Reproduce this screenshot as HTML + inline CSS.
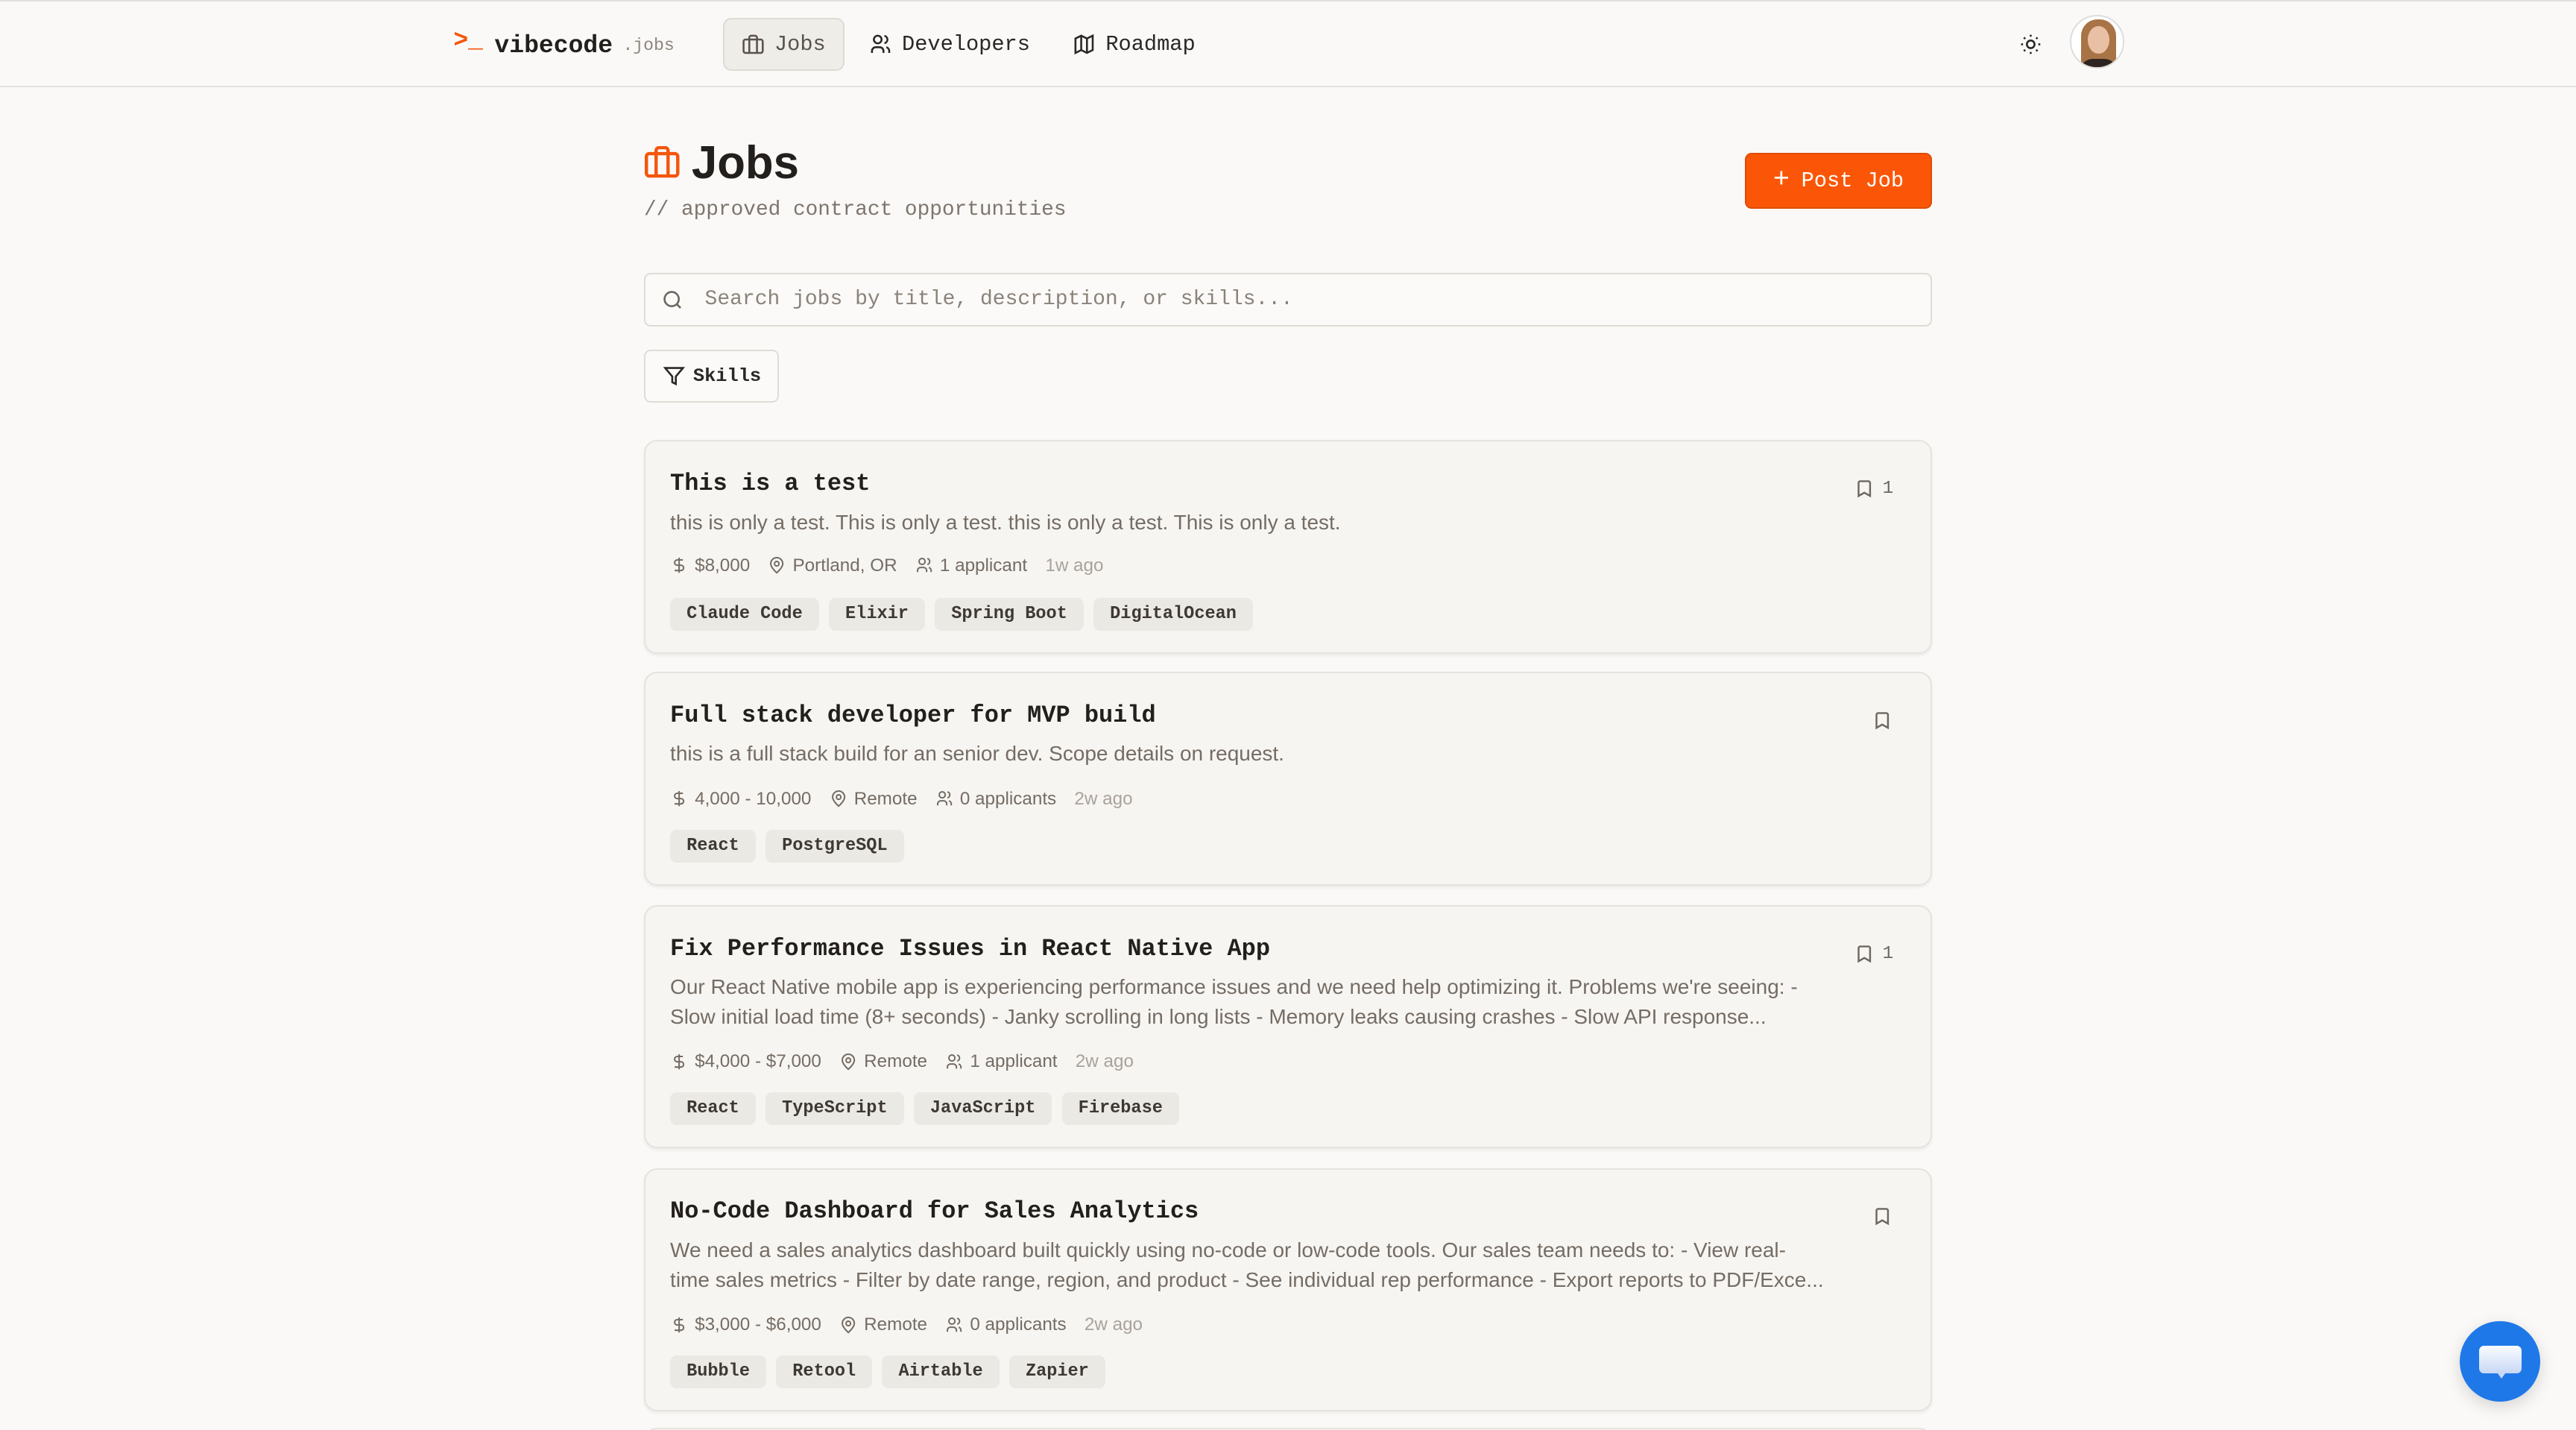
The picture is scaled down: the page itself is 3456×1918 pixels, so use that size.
<!DOCTYPE html>
<html><head><meta charset="utf-8">
<style>
*{box-sizing:border-box;margin:0;padding:0}
html,body{width:3456px;height:1918px;overflow:hidden;background:#faf9f7}
#z{zoom:2.2041;width:1568px;height:870.2px;position:relative;background:#faf9f7;border-top:1px solid #e2e0dc;font-family:"Liberation Sans",sans-serif;color:#2b2724}
.mono{font-family:"Liberation Mono",monospace}
.abs{position:absolute}
header{position:absolute;left:0;top:0;width:1568px;height:52px;border-bottom:1px solid #e4e2de;background:#faf9f7}
.nav{position:absolute;top:10px;height:32px;display:flex;align-items:center;gap:6px;font-family:"Liberation Mono",monospace;font-size:13px;color:#2b2724}
svg{display:block}
.card{position:absolute;left:392px;width:784px;background:#f6f5f2;border:1px solid #e6e3de;border-radius:8px;box-shadow:0 1px 2px rgba(0,0,0,.06)}
.t{position:absolute;left:15px;font-family:"Liberation Mono",monospace;font-weight:bold;font-size:14.5px;color:#221f1c}
.d{position:absolute;left:15px;font-size:12.7px;color:#756c64;line-height:18px;white-space:nowrap}
.m{position:absolute;left:15px;display:flex;align-items:center;font-size:11px;color:#756c64;gap:4px;white-space:nowrap}
.m .g{color:#aaa29a;margin-left:7px}
.m svg{margin-left:7px}
.m svg:first-child{margin-left:0}
.tags{position:absolute;left:15px;display:flex;gap:6px}
.tag{height:20px;padding:0 10px;background:#ebe9e4;border-radius:4px;font-family:"Liberation Mono",monospace;font-weight:bold;font-size:10.7px;color:#3e3833;line-height:20px}
.bm{position:absolute;display:flex;align-items:center;gap:5px;font-family:"Liberation Mono",monospace;font-size:11px;color:#6e665f}
</style></head><body><div id="z">
<svg width="0" height="0" style="position:absolute">
<symbol id="usd" viewBox="0 0 24 24"><path d="M12 2v20M17 5H9.5a3.5 3.5 0 0 0 0 7h5a3.5 3.5 0 0 1 0 7H6" fill="none" stroke="#756c64" stroke-width="2"/></symbol>
<symbol id="pin" viewBox="0 0 24 24"><path d="M20 10c0 5-8 12-8 12s-8-7-8-12a8 8 0 0 1 16 0z" fill="none" stroke="#756c64" stroke-width="2"/><circle cx="12" cy="10" r="3" fill="none" stroke="#756c64" stroke-width="2"/></symbol>
<symbol id="usr" viewBox="0 0 24 24"><g fill="none" stroke="#756c64" stroke-width="2"><circle cx="9" cy="7" r="4"/><path d="M3 21v-2a4 4 0 0 1 4-4h4a4 4 0 0 1 4 4v2M16 3.1a4 4 0 0 1 0 7.8M21 21v-2a4 4 0 0 0-3-3.9"/></g></symbol>
</svg>
<header>
 <div class="abs mono" style="left:276px;top:15px;color:#f4560b;font-size:15px;font-weight:bold">&gt;_</div>
 <div class="abs mono" style="left:301px;top:18px;font-size:15px;font-weight:bold;color:#221f1c">vibecode</div>
 <div class="abs mono" style="left:379px;top:21px;font-size:10.5px;color:#8e867e">.jobs</div>
 <div class="nav" style="left:440px;width:74px;background:#efede8;border:1px solid #dedbd5;border-radius:5px;justify-content:center;color:#5a534d">
  <svg width="14" height="14" viewBox="0 0 24 24" fill="none" stroke="#5a534d" stroke-width="2"><rect x="2" y="7" width="20" height="14" rx="2"/><path d="M16 21V5a2 2 0 0 0-2-2h-4a2 2 0 0 0-2 2v16M8 7v14M16 7v14"/></svg>Jobs</div>
 <div class="nav" style="left:529px">
  <svg width="14" height="14" viewBox="0 0 24 24" fill="none" stroke="#2b2724" stroke-width="2"><circle cx="9" cy="7" r="4"/><path d="M3 21v-2a4 4 0 0 1 4-4h4a4 4 0 0 1 4 4v2M16 3.1a4 4 0 0 1 0 7.8M21 21v-2a4 4 0 0 0-3-3.9"/></svg>Developers</div>
 <div class="nav" style="left:653px">
  <svg width="14" height="14" viewBox="0 0 24 24" fill="none" stroke="#2b2724" stroke-width="2"><path d="M3 6l6-3 6 3 6-3v15l-6 3-6-3-6 3zM9 3v15M15 6v15"/></svg>Roadmap</div>
 <svg class="abs" style="left:1229px;top:19px" width="14" height="14" viewBox="0 0 24 24" fill="none" stroke="#2b2724" stroke-width="2"><circle cx="12" cy="12" r="4"/><path d="M12 2v2M12 20v2M4.9 4.9l1.4 1.4M17.7 17.7l1.4 1.4M2 12h2M20 12h2M4.9 19.1l1.4-1.4M17.7 6.3l1.4-1.4"/></svg>
 <div class="abs" style="left:1260px;top:8px;width:33px;height:33px;border-radius:50%;border:1px solid #ddd;background:#fff;overflow:hidden">
  <div class="abs" style="left:6px;top:2px;width:21px;height:30px;border-radius:10px 10px 4px 4px;background:#a87446"></div>
  <div class="abs" style="left:10px;top:6px;width:13px;height:17px;border-radius:50%;background:#eac0a5"></div>
  <div class="abs" style="left:5px;top:26px;width:23px;height:10px;border-radius:8px 8px 0 0;background:#2d2420"></div>
 </div>
</header>

<svg class="abs" style="left:392px;top:88px" width="22" height="20" viewBox="0 0 24 22" fill="none" stroke="#f4560b" stroke-width="2.2"><rect x="1.5" y="5" width="21" height="15" rx="2"/><path d="M16 20V3a2 2 0 0 0-2-2h-4a2 2 0 0 0-2 2v17M8 5v15M16 5v15"/></svg>
<div class="abs" style="left:421px;top:82px;font-size:28px;font-weight:bold;color:#221f1c">Jobs</div>
<div class="abs mono" style="left:392px;top:120px;font-size:12.6px;color:#7d756e">// approved contract opportunities</div>
<div class="abs mono" style="left:1062px;top:92px;width:114px;height:34px;background:#fb5607;border:1px solid #e04c05;border-radius:4px;color:#fff;font-size:13px;display:flex;align-items:center;justify-content:center;gap:7px"><span style="font-size:17px;font-weight:normal">+</span>Post Job</div>

<div class="abs" style="left:392px;top:165px;width:784px;height:33px;border:1px solid #dfdcd6;border-radius:4px;background:#fbfaf8"></div>
<svg class="abs" style="left:403px;top:175px" width="13" height="13" viewBox="0 0 24 24" fill="none" stroke="#6e665f" stroke-width="2.2"><circle cx="11" cy="11" r="8"/><path d="M21 21l-4.3-4.3"/></svg>
<div class="abs mono" style="left:429px;top:174px;font-size:12.7px;color:#8a827a">Search jobs by title, description, or skills...</div>

<div class="abs mono" style="left:392px;top:212px;width:82px;height:32px;border:1px solid #dfdcd6;border-radius:4px;background:#fbfaf8;font-size:11.5px;font-weight:bold;display:flex;align-items:center;gap:5px;padding-left:11px;color:#2b2724"><svg width="13" height="13" viewBox="0 0 24 24" fill="none" stroke="#2b2724" stroke-width="2.2"><path d="M22 3H2l8 9.5V19l4 2v-8.5z"/></svg>Skills</div>

<div class="card" style="top:267px;height:130px">
 <div class="t" style="top:17px">This is a test</div>
 <div class="bm" style="left:736px;top:22px"><svg width="12" height="13" viewBox="0 0 24 24" fill="none" stroke="#6e665f" stroke-width="2.2"><path d="M19 21l-7-4-7 4V5a2 2 0 0 1 2-2h10a2 2 0 0 1 2 2z"/></svg>1</div>
 <div class="d" style="top:40px">this is only a test. This is only a test. this is only a test. This is only a test.</div>
 <div class="m" style="top:69px"><svg width="11" height="11"><use href="#usd"/></svg>$8,000<svg width="11" height="11"><use href="#pin"/></svg>Portland, OR<svg width="11" height="11"><use href="#usr"/></svg>1 applicant<span class="g">1w ago</span></div>
 <div class="tags" style="top:95px"><span class="tag">Claude Code</span><span class="tag">Elixir</span><span class="tag">Spring Boot</span><span class="tag">DigitalOcean</span></div>
</div>
<div class="card" style="top:408px;height:130px">
 <div class="t" style="top:17px">Full stack developer for MVP build</div>
 <div class="bm" style="left:747px;top:22px"><svg width="12" height="13" viewBox="0 0 24 24" fill="none" stroke="#6e665f" stroke-width="2.2"><path d="M19 21l-7-4-7 4V5a2 2 0 0 1 2-2h10a2 2 0 0 1 2 2z"/></svg></div>
 <div class="d" style="top:40px">this is a full stack build for an senior dev. Scope details on request.</div>
 <div class="m" style="top:70px"><svg width="11" height="11"><use href="#usd"/></svg>4,000 - 10,000<svg width="11" height="11"><use href="#pin"/></svg>Remote<svg width="11" height="11"><use href="#usr"/></svg>0 applicants<span class="g">2w ago</span></div>
 <div class="tags" style="top:95px"><span class="tag">React</span><span class="tag">PostgreSQL</span></div>
</div>
<div class="card" style="top:550px;height:148px">
 <div class="t" style="top:17px">Fix Performance Issues in React Native App</div>
 <div class="bm" style="left:736px;top:22px"><svg width="12" height="13" viewBox="0 0 24 24" fill="none" stroke="#6e665f" stroke-width="2.2"><path d="M19 21l-7-4-7 4V5a2 2 0 0 1 2-2h10a2 2 0 0 1 2 2z"/></svg>1</div>
 <div class="d" style="top:40px">Our React Native mobile app is experiencing performance issues and we need help optimizing it. Problems we're seeing: -<br>Slow initial load time (8+ seconds) - Janky scrolling in long lists - Memory leaks causing crashes - Slow API response...</div>
 <div class="m" style="top:88px"><svg width="11" height="11"><use href="#usd"/></svg>$4,000 - $7,000<svg width="11" height="11"><use href="#pin"/></svg>Remote<svg width="11" height="11"><use href="#usr"/></svg>1 applicant<span class="g">2w ago</span></div>
 <div class="tags" style="top:113px"><span class="tag">React</span><span class="tag">TypeScript</span><span class="tag">JavaScript</span><span class="tag">Firebase</span></div>
</div>
<div class="card" style="top:710px;height:148px">
 <div class="t" style="top:17px">No-Code Dashboard for Sales Analytics</div>
 <div class="bm" style="left:747px;top:22px"><svg width="12" height="13" viewBox="0 0 24 24" fill="none" stroke="#6e665f" stroke-width="2.2"><path d="M19 21l-7-4-7 4V5a2 2 0 0 1 2-2h10a2 2 0 0 1 2 2z"/></svg></div>
 <div class="d" style="top:40px">We need a sales analytics dashboard built quickly using no-code or low-code tools. Our sales team needs to: - View real-<br>time sales metrics - Filter by date range, region, and product - See individual rep performance - Export reports to PDF/Exce...</div>
 <div class="m" style="top:88px"><svg width="11" height="11"><use href="#usd"/></svg>$3,000 - $6,000<svg width="11" height="11"><use href="#pin"/></svg>Remote<svg width="11" height="11"><use href="#usr"/></svg>0 applicants<span class="g">2w ago</span></div>
 <div class="tags" style="top:113px"><span class="tag">Bubble</span><span class="tag">Retool</span><span class="tag">Airtable</span><span class="tag">Zapier</span></div>
</div>
<div class="card" style="top:868px;height:40px"></div>

<div class="abs" style="left:1497px;top:803px;width:49px;height:49px;border-radius:50%;background:#1f78e8;box-shadow:0 3px 10px rgba(0,0,0,.15)">
 <div class="abs" style="left:12px;top:15px;width:26px;height:17px;border-radius:3px;background:linear-gradient(#fafcff,#c9d8f5)"></div>
 <div class="abs" style="left:22px;top:30px;width:0;height:0;border-left:4px solid transparent;border-right:4px solid transparent;border-top:5px solid #c9d8f5"></div>
</div>
</div></body></html>
